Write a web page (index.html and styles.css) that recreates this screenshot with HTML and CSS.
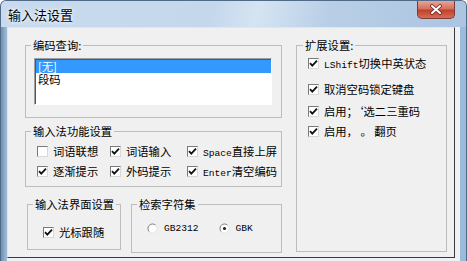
FILE: index.html
```html
<!DOCTYPE html>
<html lang="zh-CN">
<head>
  <meta charset="UTF-8" />
  <title>输入法设置</title>
  <link rel="stylesheet" href="styles.css">
</head>
<body>
  <div class="window">
    <div class="titlebar">
      <span class="title">输入法设置</span>
      <div class="close">
        <svg width="14" height="11" viewBox="0 0 14 11">
          <path d="M3 2 L11 9 M11 2 L3 9" stroke="#6b2a22" stroke-width="3.6" stroke-linecap="round"/>
          <path d="M3 2 L11 9 M11 2 L3 9" stroke="#fff" stroke-width="2" stroke-linecap="round"/>
        </svg>
      </div>
    </div>

    <div class="client">
      <div class="panel">
        <div class="col-left">
          <!-- 编码查询 -->
          <fieldset class="group group-query">
            <legend>编码查询:</legend>
            <div class="listbox">
              <div class="item selected">[无]</div>
              <div class="item">段码</div>
            </div>
          </fieldset>

          <!-- 功能设置 -->
          <fieldset class="group group-func">
            <legend>输入法功能设置</legend>
            <div class="func-grid">
              <label class="check"><span class="box"></span><span class="txt">词语联想</span></label>
              <label class="check"><span class="box"><svg width="9" height="9" viewBox="0 0 9 9"><path d="M1 4.2 L3.3 6.6 L8 1.6" stroke="#111" stroke-width="1.8" fill="none"/></svg></span><span class="txt">词语输入</span></label>
              <label class="check"><span class="box"><svg width="9" height="9" viewBox="0 0 9 9"><path d="M1 4.2 L3.3 6.6 L8 1.6" stroke="#111" stroke-width="1.8" fill="none"/></svg></span><span class="txt"><span class="en">Space</span>直接上屏</span></label>
              <label class="check"><span class="box"><svg width="9" height="9" viewBox="0 0 9 9"><path d="M1 4.2 L3.3 6.6 L8 1.6" stroke="#111" stroke-width="1.8" fill="none"/></svg></span><span class="txt">逐渐提示</span></label>
              <label class="check"><span class="box"><svg width="9" height="9" viewBox="0 0 9 9"><path d="M1 4.2 L3.3 6.6 L8 1.6" stroke="#111" stroke-width="1.8" fill="none"/></svg></span><span class="txt">外码提示</span></label>
              <label class="check"><span class="box"><svg width="9" height="9" viewBox="0 0 9 9"><path d="M1 4.2 L3.3 6.6 L8 1.6" stroke="#111" stroke-width="1.8" fill="none"/></svg></span><span class="txt"><span class="en">Enter</span>清空编码</span></label>
            </div>
          </fieldset>

          <div class="bottom-row">
            <fieldset class="group group-ui">
              <legend>输入法界面设置</legend>
              <label class="check check-ui"><span class="box"><svg width="9" height="9" viewBox="0 0 9 9"><path d="M1 4.2 L3.3 6.6 L8 1.6" stroke="#111" stroke-width="1.8" fill="none"/></svg></span><span class="txt">光标跟随</span></label>
            </fieldset>

            <fieldset class="group group-charset">
              <legend>检索字符集</legend>
              <div class="radio-row">
                <label class="radio">
                  <svg width="11" height="11" viewBox="0 0 11 11">
                    <circle cx="5.5" cy="5.5" r="4.5" fill="#fff"/>
                    <path d="M2.3 8.7 A4.5 4.5 0 0 1 8.7 2.3" stroke="#7c7c7c" fill="none"/>
                    <path d="M8.7 2.3 A4.5 4.5 0 0 1 2.3 8.7" stroke="#e4e4e4" fill="none"/>
                  </svg>
                  <span class="en">GB2312</span>
                </label>
                <label class="radio">
                  <svg width="11" height="11" viewBox="0 0 11 11">
                    <circle cx="5.5" cy="5.5" r="4.5" fill="#fff"/>
                    <path d="M2.3 8.7 A4.5 4.5 0 0 1 8.7 2.3" stroke="#7c7c7c" fill="none"/>
                    <path d="M8.7 2.3 A4.5 4.5 0 0 1 2.3 8.7" stroke="#e4e4e4" fill="none"/>
                    <circle cx="5.5" cy="5.5" r="1.6" fill="#222"/>
                  </svg>
                  <span class="en">GBK</span>
                </label>
              </div>
            </fieldset>
          </div>
        </div>

        <!-- 扩展设置 -->
        <fieldset class="group group-ext">
          <legend>扩展设置:</legend>
          <label class="check ext-1"><span class="box"><svg width="9" height="9" viewBox="0 0 9 9"><path d="M1 4.2 L3.3 6.6 L8 1.6" stroke="#111" stroke-width="1.8" fill="none"/></svg></span><span class="txt"><span class="en">LShift</span>切换中英状态</span></label>
          <label class="check ext-2"><span class="box"><svg width="9" height="9" viewBox="0 0 9 9"><path d="M1 4.2 L3.3 6.6 L8 1.6" stroke="#111" stroke-width="1.8" fill="none"/></svg></span><span class="txt">取消空码锁定键盘</span></label>
          <label class="check ext-3"><span class="box"><svg width="9" height="9" viewBox="0 0 9 9"><path d="M1 4.2 L3.3 6.6 L8 1.6" stroke="#111" stroke-width="1.8" fill="none"/></svg></span><span class="txt">启用；‘选二三重码</span></label>
          <label class="check ext-4"><span class="box"><svg width="9" height="9" viewBox="0 0 9 9"><path d="M1 4.2 L3.3 6.6 L8 1.6" stroke="#111" stroke-width="1.8" fill="none"/></svg></span><span class="txt">启用，&nbsp;。&nbsp;翻页</span></label>
        </fieldset>
      </div>
    </div>
  </div>
</body>
</html>
```

FILE: styles.css
```css
body {
  margin: 0;
  background: #fff;
  font-family: "Noto Sans CJK SC", "DejaVu Sans", sans-serif;
  font-size: 11.3px;
  color: #000;
}

.window {
  width: 467px;
  height: 261px;
  box-sizing: border-box;
  border-radius: 6px 6px 0 0;
  border: 1px solid #4f6b88;
  border-bottom: none;
  background: linear-gradient(to right, #6f8fb2 0, #9bb7d5 5px, #aac4df 40%, #9cbad9 100%);
  overflow: hidden;
}

/* title bar */
.titlebar {
  height: 26px;
  display: flex;
  justify-content: space-between;
  align-items: flex-start;
  background: linear-gradient(100deg, #c8daee 0, #c4d7eb 45%, #d5e4f2 55%, #b9cfe7 70%, #abc4e0 100%);
}

.title {
  font-size: 13px;
  line-height: 16px;
  margin: 6px 0 0 7px;
  text-shadow: 0 0 6px rgba(255, 255, 255, 0.95), 0 0 3px rgba(255, 255, 255, 0.9);
}

.close {
  width: 38px;
  height: 18px;
  margin-right: 11px;
  box-sizing: border-box;
  border: 1px solid #7b3a35;
  border-top: none;
  border-radius: 0 0 5px 5px;
  background: linear-gradient(#e8a597 0, #d7705e 45%, #c1412c 55%, #d56d58 100%);
  display: flex;
  align-items: center;
  justify-content: center;
}

/* client area */
.client {
  margin-left: 6px;
  width: 453px;
  height: 234px;
  box-sizing: border-box;
  padding: 0 5px 3px 0;
  background: #eef1f5;
}

.panel {
  height: 100%;
  box-sizing: border-box;
  border: 1px solid;
  border-color: #e2e6ea #3a3a3a #3a3a3a #e2e6ea;
  background: #f0f0f0;
  padding: 10px 0 0 17px;
  display: flex;
  gap: 14px;
}

.col-left {
  width: 257px;
  display: flex;
  flex-direction: column;
}

.group {
  margin: 0;
  padding: 0;
  box-sizing: border-box;
  border: 1px solid #bdbdbd;
  min-width: 0;
}

.group legend {
  margin-left: 5px;
  padding: 0 2px;
  line-height: 14px;
}

.group-query {
  height: 80px;
}

.listbox {
  margin: 6px 9px 0 8px;
  height: 47px;
  box-sizing: border-box;
  border: 1px solid;
  border-color: #a0a0a0 #fff #fff #a0a0a0;
  box-shadow: inset 1px 1px 0 #555;
  background: #fff;
  padding: 1px 0 0 1px;
}

.item {
  height: 13px;
  line-height: 13px;
  padding-left: 2px;
}

.item.selected {
  background: #3399ff;
  color: #fff;
}

.group-func {
  height: 63px;
  margin-top: 6px;
}

.func-grid {
  display: grid;
  grid-template-columns: 73px 77px auto;
  grid-auto-rows: 20px;
  padding-left: 11px;
  margin-top: 3px;
}

.check {
  display: flex;
  align-items: center;
  gap: 5px;
  white-space: nowrap;
}

.box {
  width: 11px;
  height: 11px;
  box-sizing: border-box;
  border: 1px solid;
  border-color: #7a7a7a #d8d8d8 #d8d8d8 #7a7a7a;
  background: #fff;
  display: flex;
  align-items: center;
  justify-content: center;
  flex-shrink: 0;
}

.en {
  font-family: "Liberation Mono", "DejaVu Sans Mono", monospace;
  font-size: 9.6px;
}

.bottom-row {
  display: flex;
  gap: 10px;
  margin-top: 10px;
}

.group-ui {
  width: 97px;
  height: 53px;
  margin-left: 2px;
}

.check-ui {
  height: 18px;
  margin: 12px 0 0 15px;
}

.group-charset {
  width: 151px;
  height: 56px;
  flex-shrink: 0;
}

.radio-row {
  display: flex;
  gap: 20px;
  height: 18px;
  margin: 8px 0 0 15px;
}

.radio {
  display: flex;
  align-items: center;
  gap: 6px;
}

.group-ext {
  width: 151px;
  height: 214px;
  flex-shrink: 0;
}

.group-ext legend {
  margin-left: 6px;
}

.group-ext .check {
  height: 18px;
  padding-left: 11px;
}

.ext-1 { margin-top: 2px; }
.ext-2 { margin-top: 8px; }
.ext-3 { margin-top: 4px; }
.ext-4 { margin-top: 2px; }
```
